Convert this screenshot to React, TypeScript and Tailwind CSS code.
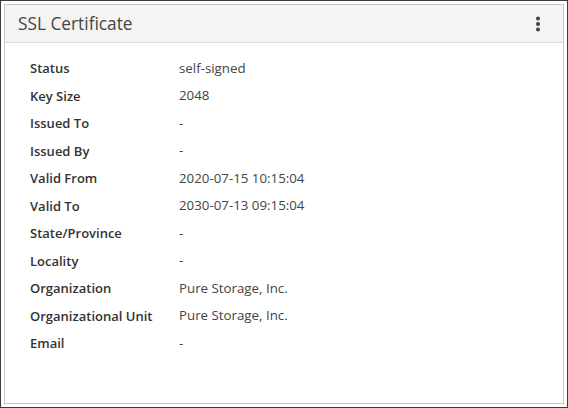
export default function App() {
  const rows: [string, string][] = [
    ["Status", "self-signed"],
    ["Key Size", "2048"],
    ["Issued To", "-"],
    ["Issued By", "-"],
    ["Valid From", "2020-07-15 10:15:04"],
    ["Valid To", "2030-07-13 09:15:04"],
    ["State/Province", "-"],
    ["Locality", "-"],
    ["Organization", "Pure Storage, Inc."],
    ["Organizational Unit", "Pure Storage, Inc."],
    ["Email", "-"],
  ];

  return (
    <div
      className="w-[568px] h-[408px] border border-[#3a3a3a] bg-white p-[3px]"
      style={{ fontFamily: '"Open Sans", "Liberation Sans", sans-serif' }}
    >
      <div className="h-full border border-[#c8c8c8] flex flex-col">
        <div className="h-[38px] bg-[#f4f4f4] border-b border-[#dcdcdc] flex items-center justify-between pl-[13px] pr-[22px]">
          <span className="text-[17.3px] text-[#444]">SSL Certificate</span>
          <svg width="6" height="16" viewBox="0 0 6 16" className="text-[#444]">
            <circle cx="3" cy="2.5" r="2" fill="currentColor" />
            <circle cx="3" cy="8" r="2" fill="currentColor" />
            <circle cx="3" cy="13.5" r="2" fill="currentColor" />
          </svg>
        </div>
        <div className="pt-[12px] pl-[25px] flex flex-col">
          {rows.map(([label, value]) => (
            <div key={label} className="flex items-center h-[27.5px]">
              <span className="w-[149px] text-[13px] font-semibold text-[#333]">{label}</span>
              <span className="text-[13.3px] text-[#444]">{value}</span>
            </div>
          ))}
        </div>
      </div>
    </div>
  );
}
